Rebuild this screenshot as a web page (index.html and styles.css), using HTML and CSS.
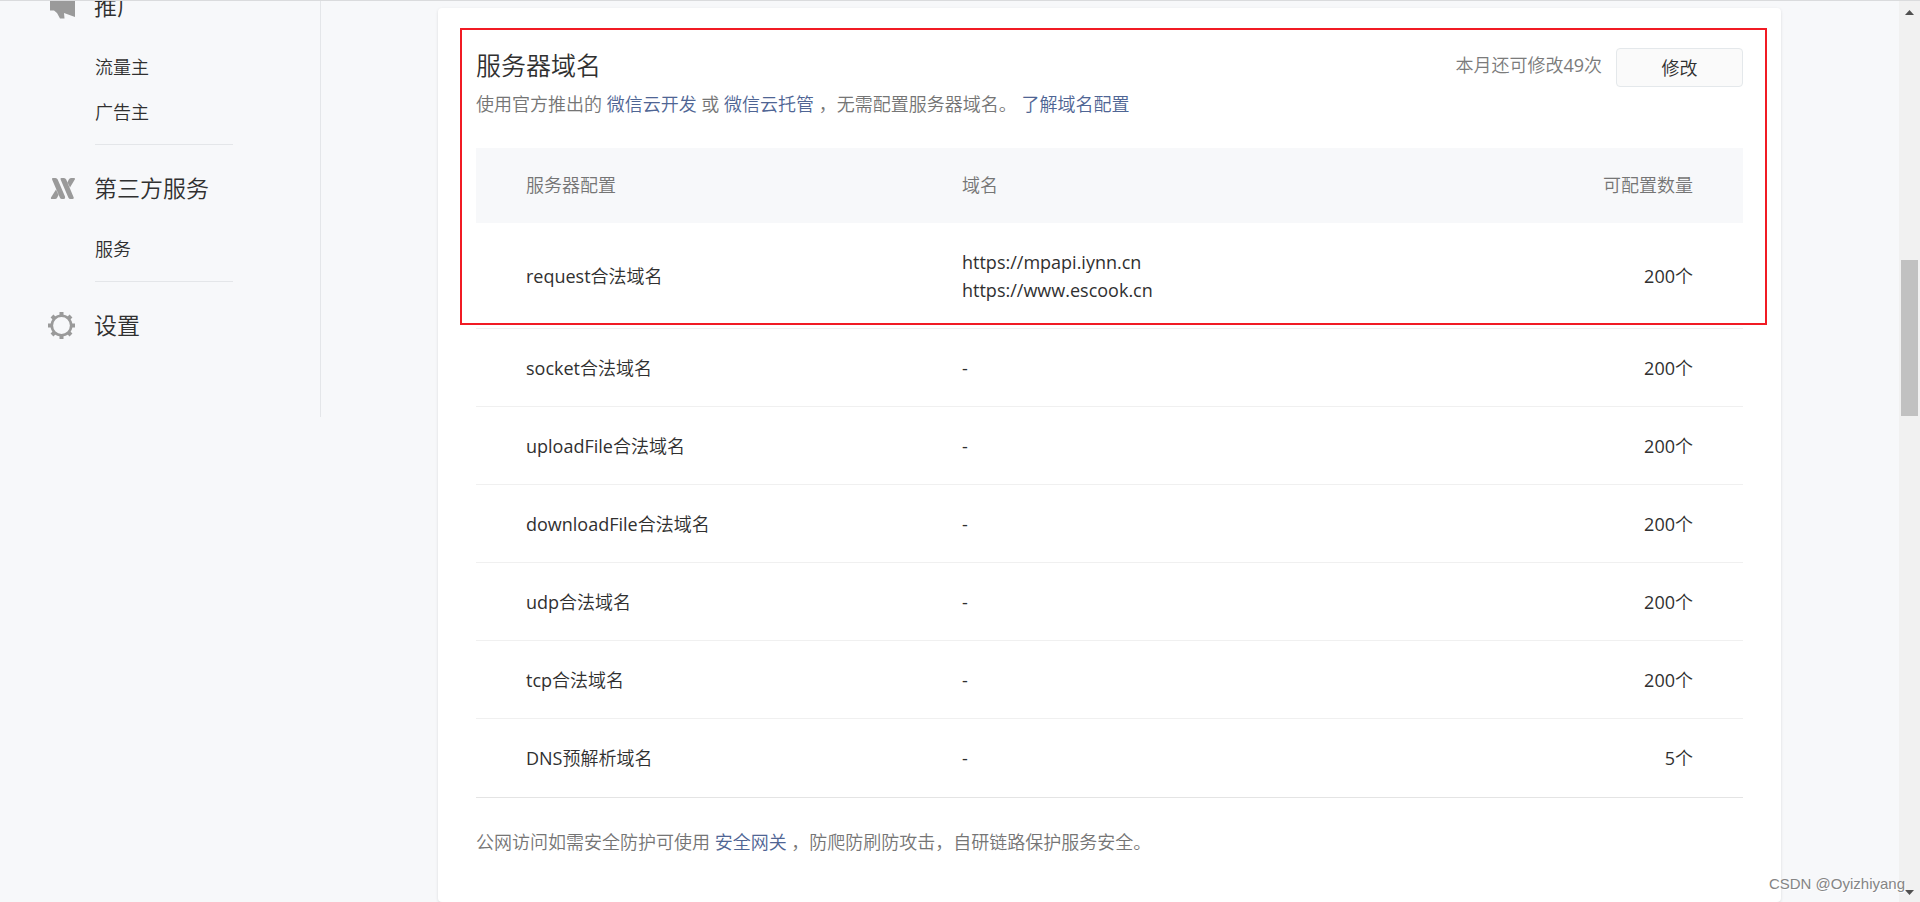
FILE: index.html
```html
<!DOCTYPE html>
<html lang="zh-CN">
<head>
<meta charset="utf-8">
<meta name="viewport" content="width=device-width, initial-scale=1">
<title>服务器域名</title>
<link rel="stylesheet" href="styles.css">
</head>
<body>
<div class="page">
  <nav class="sidebar" aria-label="主菜单">
    <section class="group">
      <h2 class="group-title">
        <svg class="icon" viewBox="0 0 27 27" aria-hidden="true"><path d="M2 7h5l20-6v23l-11-4 .5 5.5h-4.500L9 20l-3-2.500H2z"/></svg>
        推广
      </h2>
      <ul class="group-list">
        <li><a href="#traffic">流量主</a></li>
        <li><a href="#ads">广告主</a></li>
      </ul>
    </section>
    <section class="group">
      <h2 class="group-title">
        <svg class="icon" viewBox="0 0 27 27" aria-hidden="true"><path d="M4 3.500Q4 3 5 3h2.500q1.500 0 2.200 1.500L17 21.500Q17.500 24 15.500 24h-1.500q-1.500 0-2.200-1.500L4.300 5Q4 4.200 4 3.500zM12.500 3.500Q12.500 3 13.500 3H16q1.500 0 2.200 1.500l7.500 18Q26 24 24.500 24h-2q-1.500 0-2.200-1.500L12.800 5Q12.500 4.200 12.500 3.500zM8 14.500l2.500 5.500-1.200 2.500Q8.500 24 7 24H4q-1.500 0-1-1.500zM22 12.500l-2.500-5.300 1.300-2.700Q21.500 3 23 3h3q1.500 0 .8 1.500z"/></svg>
        第三方服务
      </h2>
      <ul class="group-list">
        <li><a href="#services">服务</a></li>
      </ul>
    </section>
    <section class="group group-last">
      <h2 class="group-title">
        <svg class="icon" viewBox="0 0 27 27" aria-hidden="true"><g fill="none" stroke="#9a9a9a"><circle cx="13.500" cy="13.500" r="9.700" stroke-width="2.600"/><path stroke-width="4" d="M13.500 0v4M13.500 23v4M0 13.500h4M23 13.500h4M4 4l2.500 2.500M20.500 20.500L23 23M23 4l-2.500 2.500M6.500 20.500L4 23"/></g></svg>
        设置
      </h2>
    </section>
  </nav>

  <main class="content">
    <div class="card">
      <header class="card-head">
        <div>
          <h1 class="card-title">服务器域名</h1>
          <p class="hint">使用官方推出的 <a href="#cloud">微信云开发</a> 或 <a href="#hosting">微信云托管</a> ，无需配置服务器域名。 <a href="#learn">了解域名配置</a></p>
        </div>
        <div class="actions">
          <span class="quota">本月还可修改49次</span>
          <button class="button" type="button">修改</button>
        </div>
      </header>

      <table class="domains">
        <thead>
          <tr><th scope="col" class="col-name">服务器配置</th><th scope="col">域名</th><th scope="col" class="col-count">可配置数量</th></tr>
        </thead>
        <tbody>
          <tr><td>request合法域名</td><td>https://mpapi.iynn.cn<br>https://www.escook.cn</td><td class="col-count">200个</td></tr>
          <tr><td>socket合法域名</td><td>-</td><td class="col-count">200个</td></tr>
          <tr><td>uploadFile合法域名</td><td>-</td><td class="col-count">200个</td></tr>
          <tr><td>downloadFile合法域名</td><td>-</td><td class="col-count">200个</td></tr>
          <tr><td>udp合法域名</td><td>-</td><td class="col-count">200个</td></tr>
          <tr><td>tcp合法域名</td><td>-</td><td class="col-count">200个</td></tr>
          <tr><td>DNS预解析域名</td><td>-</td><td class="col-count">5个</td></tr>
        </tbody>
      </table>

      <p class="hint">公网访问如需安全防护可使用 <a href="#gateway">安全网关</a> ，防爬防刷防攻击，自研链路保护服务安全。</p>
      <div class="highlight"></div>
    </div>
  </main>

  <div class="scrollbar" aria-hidden="true">
    <svg class="arrow" viewBox="0 0 9 5"><path d="M4.500 0L9 5H0z"/></svg>
    <div class="track"><div class="thumb"></div></div>
    <svg class="arrow" viewBox="0 0 9 5"><path d="M0 0h9L4.500 5z"/></svg>
  </div>
  <span class="watermark">CSDN @Oyizhiyang</span>
</div>
</body>
</html>
```
FILE: styles.css
```css
* { box-sizing: border-box; }

body {
  margin: 0;
  background: #f7f8fa;
  color: #303030;
  font: 400 18px/28px "Open Sans", "Noto Sans CJK SC DemiLight", "Noto Sans CJK SC Light", "Noto Sans CJK SC", sans-serif;
}

h1, h2, p, ul { margin: 0; padding: 0; font-weight: inherit; }
ul { list-style: none; }
a { color: #4f6594; text-decoration: none; }

.page {
  position: relative;
  display: flex;
  align-items: flex-start;
  height: 100vh;
  overflow: hidden;
  border-top: 1px solid #dadbdd;
}

/* Left menu */
.sidebar {
  flex: none;
  width: 321px;
  margin-top: -10px;
  padding: 0 0 77px 48px;
  border-right: 1px solid #e4e6e9;
}
.group { margin-bottom: 28px; }
.group-last { margin-bottom: 0; }
.group-title {
  display: flex;
  align-items: center;
  gap: 19px;
  font-size: 23px;
  line-height: 30px;
}
.icon { width: 27px; height: 27px; fill: #9a9a9a; }
.group-list {
  width: 138px;
  margin: 24px 0 0 47px;
  padding-bottom: 9px;
  border-bottom: 1px solid #e4e6e9;
}
.group-list a {
  display: block;
  color: #303030;
  line-height: 45px;
}

/* Settings card */
.content {
  flex: 1;
  align-self: stretch;
  padding: 7px 118px 0 117px;
}
.card {
  position: relative;
  min-height: 100%;
  padding: 35px 38px;
  background: #fff;
  border-radius: 4px;
  box-shadow: 0 1px 3px #0000001f;
}
.card-head {
  display: flex;
  justify-content: space-between;
  align-items: flex-start;
}
.card-title { font-size: 25px; line-height: 44px; }
.hint { color: #757575; line-height: 34px; }
.actions { display: flex; align-items: flex-start; gap: 14px; padding-top: 5px; }
.quota { color: #7b7b7b; line-height: 34px; }
.button {
  width: 127px;
  height: 39px;
  padding: 0;
  border: 1px solid #e4e8eb;
  border-radius: 4px;
  background: #fafafa;
  color: #303030;
  font: inherit;
}

.domains {
  width: 100%;
  margin: 27px 0;
  border-collapse: separate;
  border-spacing: 0;
  table-layout: fixed;
}
.domains th, .domains td {
  padding: 25px 0 24px;
  text-align: left;
  border-bottom: 1px solid #f0f0f0;
}
.domains tr:last-child td { padding-bottom: 25px; border-bottom-color: #e4e4e4; }
.domains th:first-child, .domains td:first-child { padding-left: 50px; }
.domains tr:last-child th {
  padding-top: 23px;
  padding-bottom: 24px;
  border: 0;
  background: #f7f8fa;
  color: #757575;
  font-weight: inherit;
}
.domains .col-name { width: 486px; }
.domains .col-count { padding-right: 50px; text-align: right; }

/* Red outline over the card */
.highlight {
  position: absolute;
  inset: 20px 14px auto 22px;
  height: 297px;
  border: 2px solid #f11b24;
  pointer-events: none;
}

/* Window scrollbar */
.scrollbar {
  display: flex;
  flex-direction: column;
  align-items: center;
  align-self: stretch;
  width: 21px;
  padding: 9px 2px 7px;
  background: #f1f1f1;
}
.arrow { width: 9px; height: 5px; fill: #505050; }
.track {
  display: grid;
  grid-template-rows: 245fr 156fr 474fr;
  flex: 1;
  width: 100%;
}
.thumb { grid-row: 2; background: #c1c1c1; }

.watermark {
  position: absolute;
  right: 15px;
  bottom: 4px;
  color: #858585;
  font: 15px/28px "Liberation Sans", Arial, sans-serif;
  text-shadow: 1px 1px 0 #fff;
}
```
